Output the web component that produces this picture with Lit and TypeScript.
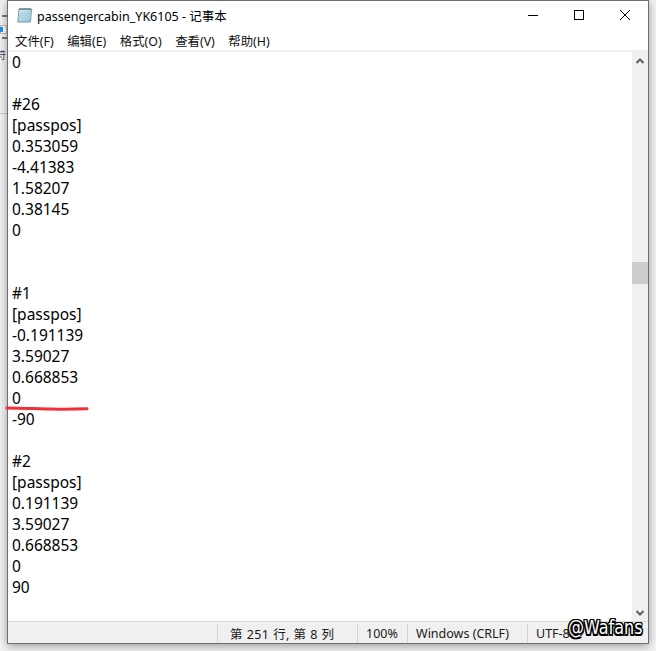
import { LitElement, html, css } from "lit";
import { customElement } from "lit/decorators.js";

const LINES = ["0","","#26","[passpos]","0.353059","-4.41383","1.58207","0.38145","0","","","#1","[passpos]","-0.191139","3.59027","0.668853","0","-90","","#2","[passpos]","0.191139","3.59027","0.668853","0","90"];
const MENUS = ["文件(F)","编辑(E)","格式(O)","查看(V)","帮助(H)"];

@customElement("app-root")
export class AppRoot extends LitElement {
  static styles = css`
    :host { display:block; width:656px; height:651px; overflow:hidden; background:#f4f4f4; font-family:"Noto Sans","Noto Sans CJK SC",sans-serif; }
    .desk { position:relative; width:656px; height:651px; display:flex; align-items:flex-start; padding-left:7px; box-sizing:border-box; }
    .win { position:relative; width:642px; height:644px; box-sizing:border-box; background:#fff; border:1px solid #6e6e6e; display:flex; flex-direction:column; box-shadow:0 2px 9px rgba(0,0,0,.38); }
    .title { height:28px; display:flex; align-items:center; flex:none; color:#000; }
    .title svg.app { margin-left:9px; flex:none; }
    .title .t { font-size:12.5px; margin-left:5px; }
    .ctrls { margin-left:auto; display:flex; }
    .ctrl { width:46px; height:28px; display:flex; align-items:center; justify-content:center; }
    .menu { height:19px; margin-top:2px; display:flex; flex:none; gap:13.5px; padding-left:7px; font-size:12.4px; align-items:center; color:#111; }
    .sep { height:2px; background:#f0f0f0; flex:none; }
    .main { flex:1; display:flex; min-height:0; }
    .text { flex:1; padding-left:4px; font-size:15.5px; line-height:21px; color:#000; white-space:pre; }
    .text div { height:21px; }
    .bar { width:16px; background:#f0f0f0; flex:none; display:flex; flex-direction:column; }
    .arrow { height:17px; display:flex; align-items:center; justify-content:center; flex:none; }
    .track { flex:1; padding-top:193px; }
    .thumb { height:22px; background:#cdcdcd; }
    .status { height:22px; flex:none; background:#f0f0f0; border-top:1px solid #d9d9d9; display:flex; font-size:12.5px; color:#1a1a1a; box-sizing:border-box; align-items:flex-end; }
    .cell { height:19px; display:flex; align-items:center; border-left:1px solid #d2d2d2; box-sizing:border-box; white-space:nowrap; padding-left:8px; }
    .c0 { width:209px; height:19px; }
    .c1 { width:140px; padding-left:12px; letter-spacing:.45px; }
    .c2 { width:50px; }
    .c3 { width:120px; }
    .stamp { position:absolute; left:568px; top:615px; font-family:"DejaVu Sans",sans-serif; font-size:19.5px; line-height:26px; font-weight:400; color:#fff; transform:scaleX(.82); transform-origin:left top; text-shadow:1.6px 0 #000,-1.6px 0 #000,0 1.5px #000,0 -1.5px #000,1.5px 1.5px #000,-1.5px -1.5px #000,1.5px -1.5px #000,-1.5px 1.5px #000; white-space:nowrap; }
    .redline { position:absolute; left:5px; top:405px; }
    .bg { position:absolute; left:0; top:0; width:7px; height:200px; overflow:hidden; }
    .b1, .b2, .b3, .b4, .b5 { position:absolute; }
    .b1 { left:2px; top:15px; width:5px; height:7px; border-top:2px solid #777; box-sizing:border-box; }
    .b2 { left:0; top:25px; width:7px; height:9px; background:#fff; border:1px solid #bbb; box-sizing:border-box; }
    .b3 { left:0; top:27px; width:3px; height:5px; background:#2a8fe0; }
    .b4 { left:2px; top:37px; width:5px; height:2px; background:#777; }
    .b5 { left:0; top:113px; width:7px; height:1px; background:#cfcfcf; }
    .frag { position:absolute; left:-4px; top:49px; font-size:10px; color:#345; line-height:12px; }
  `;

  render() {
    return html`<div class="desk">
      <div class="bg" aria-hidden="true">
        <div class="b1"></div><div class="b2"></div><div class="b3"></div><div class="b4"></div><div class="b5"></div>
        <span class="frag">符</span>
      </div>
      <div class="win">
        <div class="title">
          <svg class="app" width="15" height="16" viewBox="0 0 15 16">
            <defs><linearGradient id="g" x1="0" y1="0" x2="1" y2="1"><stop offset="0" stop-color="#d5edf2"/><stop offset="1" stop-color="#8fc4d6"/></linearGradient></defs>
            <path d="M2 2h12.500l-1 13H.8z" fill="url(#g)" stroke="#7d9aa8"/>
            <path d="M3 1v2M5 1v2M7 1v2M9 1v2M11 1v2M13 1v2" stroke="#566" stroke-width="1"/>
            <path d="M3 6.500h9M2.800 8.500h9M2.600 10.500h9" stroke="#a5d0de"/>
          </svg>
          <span class="t">passengercabin_YK6105 - 记事本</span>
          <div class="ctrls">
            <div class="ctrl"><svg width="10" height="10"><path d="M0 5.500h10" stroke="#000"/></svg></div>
            <div class="ctrl"><svg width="10" height="10"><rect x=".5" y=".5" width="9" height="9" fill="none" stroke="#000"/></svg></div>
            <div class="ctrl"><svg width="10" height="10"><path d="M0 0l10 10M10 0L0 10" stroke="#000"/></svg></div>
          </div>
        </div>
        <div class="menu">${MENUS.map(m => html`<span>${m}</span>`)}</div>
        <div class="sep"></div>
        <div class="main">
          <div class="text">${LINES.map(l => html`<div>${l}</div>`)}</div>
          <div class="bar">
            <div class="arrow"><svg width="8" height="6"><path d="M.5 5L4 1.500 7.500 5" fill="none" stroke="#606060" stroke-width="2"/></svg></div>
            <div class="track"><div class="thumb"></div></div>
            <div class="arrow"><svg width="8" height="6"><path d="M.5 1L4 4.500 7.500 1" fill="none" stroke="#606060" stroke-width="2"/></svg></div>
          </div>
        </div>
        <div class="status">
          <div class="c0"></div>
          <div class="cell c1">第 251 行, 第 8 列</div>
          <div class="cell c2">100%</div>
          <div class="cell c3">Windows (CRLF)</div>
          <div class="cell">UTF-8</div>
        </div>
      </div>
      <svg class="redline" width="86" height="8" viewBox="0 0 86 8"><path d="M2 3C12 3.200 22 3.200 28 3.500S60 4.500 82 3.800" stroke="#f0303a" stroke-width="3" fill="none" stroke-linecap="round"/></svg>
      <div class="stamp">@Wafans</div>
    </div>`;
  }
}
